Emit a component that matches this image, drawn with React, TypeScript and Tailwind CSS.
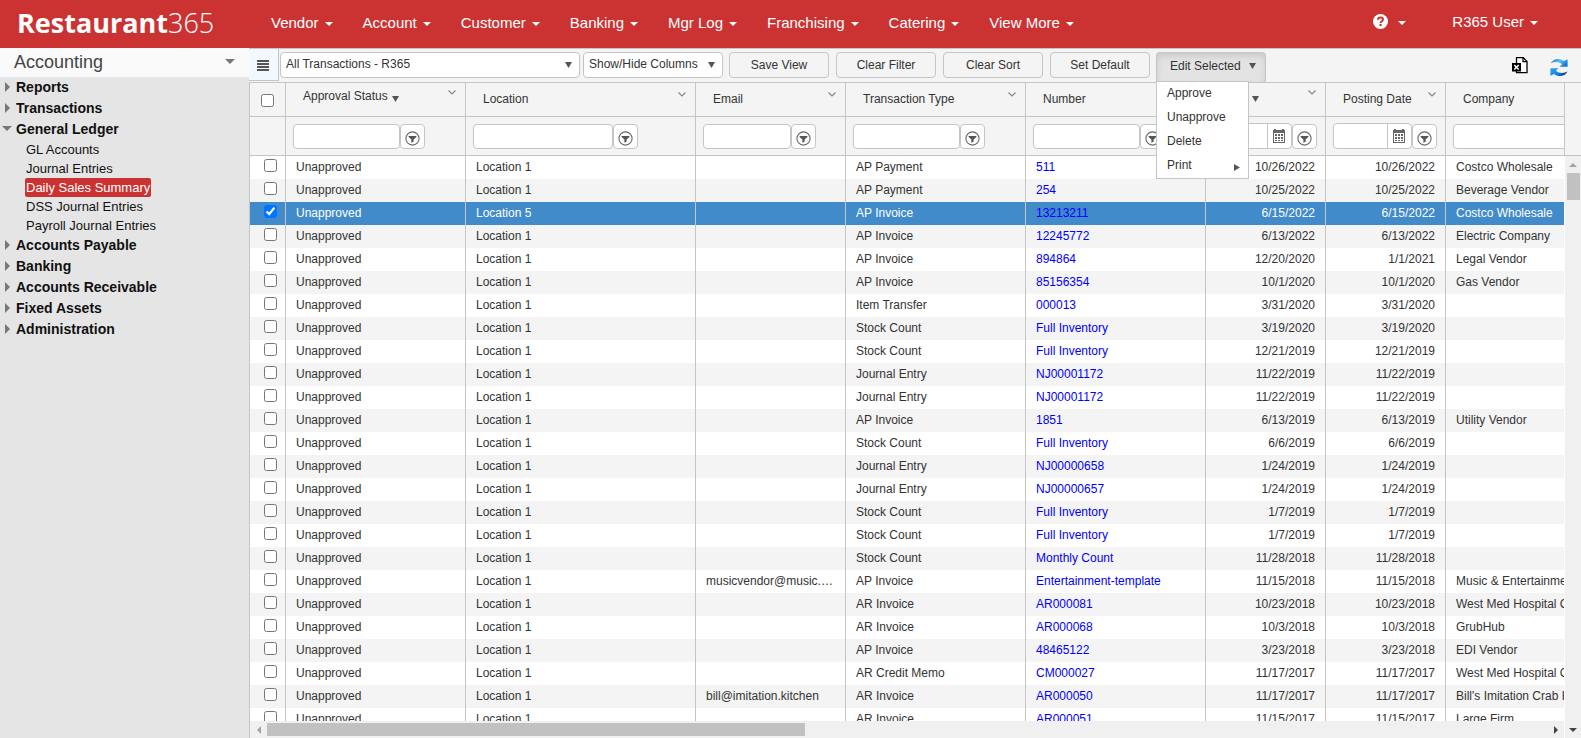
import { clsx } from "clsx";

const navItems = ["Vendor", "Account", "Customer", "Banking", "Mgr Log", "Franchising", "Catering", "View More"];

const sections = [
  { name: "Reports" },
  { name: "Transactions" },
  {
    name: "General Ledger",
    children: ["GL Accounts", "Journal Entries", "Daily Sales Summary", "DSS Journal Entries", "Payroll Journal Entries"],
  },
  { name: "Accounts Payable" },
  { name: "Banking" },
  { name: "Accounts Receivable" },
  { name: "Fixed Assets" },
  { name: "Administration" },
];

const columns = [
  { name: "Approval Status", width: "w-[180px]", sorted: true },
  { name: "Location", width: "w-[230px]" },
  { name: "Email", width: "w-[150px]" },
  { name: "Transaction Type", width: "w-[180px]" },
  { name: "Number", width: "w-[180px]" },
  { name: "Date", width: "w-[120px]", sorted: true, date: true },
  { name: "Posting Date", width: "w-[120px]", date: true },
  { name: "Company", width: "w-[230px]" },
];

// location, email, type, number, date, posting date, company
const rows = [
  ["Location 1", "", "AP Payment", "511", "10/26/2022", "10/26/2022", "Costco Wholesale"],
  ["Location 1", "", "AP Payment", "254", "10/25/2022", "10/25/2022", "Beverage Vendor"],
  ["Location 5", "", "AP Invoice", "13213211", "6/15/2022", "6/15/2022", "Costco Wholesale"],
  ["Location 1", "", "AP Invoice", "12245772", "6/13/2022", "6/13/2022", "Electric Company"],
  ["Location 1", "", "AP Invoice", "894864", "12/20/2020", "1/1/2021", "Legal Vendor"],
  ["Location 1", "", "AP Invoice", "85156354", "10/1/2020", "10/1/2020", "Gas Vendor"],
  ["Location 1", "", "Item Transfer", "000013", "3/31/2020", "3/31/2020", ""],
  ["Location 1", "", "Stock Count", "Full Inventory", "3/19/2020", "3/19/2020", ""],
  ["Location 1", "", "Stock Count", "Full Inventory", "12/21/2019", "12/21/2019", ""],
  ["Location 1", "", "Journal Entry", "NJ00001172", "11/22/2019", "11/22/2019", ""],
  ["Location 1", "", "Journal Entry", "NJ00001172", "11/22/2019", "11/22/2019", ""],
  ["Location 1", "", "AP Invoice", "1851", "6/13/2019", "6/13/2019", "Utility Vendor"],
  ["Location 1", "", "Stock Count", "Full Inventory", "6/6/2019", "6/6/2019", ""],
  ["Location 1", "", "Journal Entry", "NJ00000658", "1/24/2019", "1/24/2019", ""],
  ["Location 1", "", "Journal Entry", "NJ00000657", "1/24/2019", "1/24/2019", ""],
  ["Location 1", "", "Stock Count", "Full Inventory", "1/7/2019", "1/7/2019", ""],
  ["Location 1", "", "Stock Count", "Full Inventory", "1/7/2019", "1/7/2019", ""],
  ["Location 1", "", "Stock Count", "Monthly Count", "11/28/2018", "11/28/2018", ""],
  ["Location 1", "musicvendor@music.com", "AP Invoice", "Entertainment-template", "11/15/2018", "11/15/2018", "Music & Entertainment"],
  ["Location 1", "", "AR Invoice", "AR000081", "10/23/2018", "10/23/2018", "West Med Hospital Catering"],
  ["Location 1", "", "AR Invoice", "AR000068", "10/3/2018", "10/3/2018", "GrubHub"],
  ["Location 1", "", "AP Invoice", "48465122", "3/23/2018", "3/23/2018", "EDI Vendor"],
  ["Location 1", "", "AR Credit Memo", "CM000027", "11/17/2017", "11/17/2017", "West Med Hospital Catering"],
  ["Location 1", "bill@imitation.kitchen", "AR Invoice", "AR000050", "11/17/2017", "11/17/2017", "Bill's Imitation Crab Kitchen"],
  ["Location 1", "", "AR Invoice", "AR000051", "11/15/2017", "11/15/2017", "Large Firm"],
];

const selectedRow = 2;

function Caret() {
  return (
    <svg width="8" height="4" viewBox="0 0 8 4" fill="currentColor" className="mt-0.5 shrink-0">
      <path d="M0 0h8L4 4z" />
    </svg>
  );
}

function DownArrow({ className }: { className?: string }) {
  return (
    <svg width="7" height="6" viewBox="0 0 7 6" fill="#555" className={clsx("shrink-0", className)}>
      <path d="M0 0h7L3.5 6z" />
    </svg>
  );
}

function Chevron() {
  return (
    <svg width="8" height="5" viewBox="0 0 8 5" fill="none" stroke="#888" strokeWidth="1.2">
      <path d="M0.5 0.5L4 4L7.5 0.5" />
    </svg>
  );
}

function FilterIcon() {
  return (
    <svg width="15" height="15" viewBox="0 0 15 15">
      <circle cx="7.5" cy="7.5" r="6.6" fill="#fff" stroke="#666" strokeWidth="1.1" />
      <path d="M3.6 4.9h7.8v1.2L8.6 8.4v2.4l-2.2.9V8.4L3.6 6.1z" fill="#555" />
    </svg>
  );
}

function CalendarIcon() {
  return (
    <svg width="12" height="15" viewBox="0 0 12 15" fill="#666">
      <path d="M0 1h1V0h2v1h6V0h2v1h1v13H0zM1 4v9h10V4z" fillRule="evenodd" />
      <path d="M2 5h2v2H2zM5 5h2v2H5zM8 5h2v2H8zM2 8h2v2H2zM5 8h2v2H5zM8 8h2v2H8zM2 11h2v1H2zM5 11h2v1H5zM8 11h2v1H8z" />
    </svg>
  );
}

function ExcelIcon() {
  return (
    <svg width="16" height="17" viewBox="0 0 16 17">
      <path d="M4.5 6V0.7h6.8l3.7 3.7v11.3H4.5V14" fill="#fff" stroke="#000" strokeWidth="1.3" />
      <path d="M11 0.7v4H15" fill="none" stroke="#000" strokeWidth="1.2" />
      <path d="M0 6h9v8.5H0z" />
      <path d="M2.3 8l4.4 4.6M6.7 8l-4.4 4.6" stroke="#fff" strokeWidth="1.5" />
    </svg>
  );
}

function RefreshIcon() {
  return (
    <svg width="18" height="19" viewBox="0 0 18 19">
      <defs>
        <linearGradient id="refreshTop" x1="0" x2="1" y1="0" y2="0.6">
          <stop offset="0" stopColor="#0b5fc4" />
          <stop offset="0.5" stopColor="#5cc0f8" />
          <stop offset="1" stopColor="#0e78dc" />
        </linearGradient>
        <linearGradient id="refreshBottom" x1="0" x2="1" y1="0" y2="0.6">
          <stop offset="0" stopColor="#2aa5f5" />
          <stop offset="0.6" stopColor="#1583e6" />
          <stop offset="1" stopColor="#063c92" />
        </linearGradient>
      </defs>
      <path d="M0.5 5.5C3 0.8 9 -0.8 14 3L17.6 1.2v7.6H9.6l2.6-2.5C8.8 3.6 4.5 3.4 0.5 5.5z" fill="url(#refreshTop)" />
      <path d="M17.5 13.5C15 18.2 9 19.8 4 16L0.4 17.8v-7.6h8l-2.6 2.5c3.4 2.7 7.7 2.9 11.7.8z" fill="url(#refreshBottom)" />
    </svg>
  );
}

function TopBar() {
  return (
    <header className="flex h-12 shrink-0 items-center bg-[#cb3333] pb-0.5 text-[15px] text-white">
      <a href="#" className="w-[253px] shrink-0 pl-[17px] font-['Open_Sans',sans-serif] text-[27px] leading-9 font-bold">
        Restaurant<span className="font-light">365</span>
      </a>
      <nav className="flex gap-[30px] pl-[18px]">
        {navItems.map((item) => (
          <button key={item} className="flex items-center gap-1.5 whitespace-nowrap">
            {item}
            <Caret />
          </button>
        ))}
      </nav>
      <div className="ml-auto flex items-center gap-[46px] pr-[43px] pb-0.5">
        <button aria-label="Help" className="flex items-center gap-2.5">
          <svg width="15" height="15" viewBox="0 0 15 15">
            <circle cx="7.5" cy="7.5" r="7.5" fill="#fff" />
            <path d="M4.9 5.8C5 4.3 6 3.5 7.5 3.5s2.5.8 2.5 2C10 7.2 7.6 7.2 7.6 9" fill="none" stroke="#cb3333" strokeWidth="2" />
            <path d="M6.5 10h2.2v2H6.5z" fill="#cb3333" />
          </svg>
          <Caret />
        </button>
        <button className="flex items-center gap-1.5">
          R365 User
          <Caret />
        </button>
      </div>
    </header>
  );
}

function Sidebar() {
  return (
    <aside className="w-[249px] shrink-0 bg-[#e5e5e5]">
      <button className="flex h-[29px] w-full items-center justify-between bg-[#fafafa] px-3.5 pb-0.5 text-lg leading-7 text-[#444]">
        Accounting
        <svg width="10" height="5" viewBox="0 0 10 5" fill="#777">
          <path d="M0 0h10L5 5z" />
        </svg>
      </button>
      <ul className="text-[#111]">
        {sections.map((section) => (
          <li key={section.name}>
            <button className="flex h-[21px] items-center pb-0.5 text-sm font-bold">
              <span className="flex w-4 justify-center pr-0.5">
                {section.children ? (
                  <svg width="10" height="5" viewBox="0 0 10 5" fill="#777">
                    <path d="M0 0h10L5 5z" />
                  </svg>
                ) : (
                  <svg width="5" height="10" viewBox="0 0 5 10" fill="#777">
                    <path d="M0 0v10l5-5z" />
                  </svg>
                )}
              </span>
              {section.name}
            </button>
            {section.children && (
              <ul className="pl-[25px] text-[13px]">
                {section.children.map((child) => (
                  <li key={child} className="flex h-[19px] items-center">
                    <a
                      href="#"
                      className={clsx(
                        "rounded-xs px-px leading-[19px]",
                        child === "Daily Sales Summary" && "bg-[#cb3333] text-white"
                      )}
                    >
                      {child}
                    </a>
                  </li>
                ))}
              </ul>
            )}
          </li>
        ))}
      </ul>
    </aside>
  );
}

function ToolbarSelect({ label, value, className }: { label: string; value: string; className: string }) {
  return (
    <div className={clsx("relative shrink-0", className)}>
      <select
        aria-label={label}
        className="h-[26px] w-full appearance-none rounded border border-[#c5c5c5] bg-white pr-5 pb-[3px] pl-[5px]"
      >
        <option>{value}</option>
      </select>
      <DownArrow className="pointer-events-none absolute top-2.5 right-2" />
    </div>
  );
}

function Toolbar() {
  return (
    <div className="flex h-[34px] shrink-0 border-t border-[#c5c5c5] bg-[#f4f4f4]">
      <button
        aria-label="Toggle menu"
        className="flex h-8 w-[30px] shrink-0 items-center justify-center border-r border-b border-[#c5c5c5] bg-[#f3f8fc] pt-0.5 pr-px"
      >
        <svg width="12" height="11" viewBox="0 0 12 11" fill="#555">
          <path d="M0 0h12v2H0zM0 3h12v2H0zM0 6h12v2H0zM0 9h12v2H0z" />
        </svg>
      </button>
      <div className="flex flex-1 items-start pt-[3px] pl-px">
        <ToolbarSelect label="View" value="All Transactions - R365" className="mr-[3px] w-[300px]" />
        <ToolbarSelect label="Columns" value="Show/Hide Columns" className="w-[140px]" />
        <div className="ml-1.5 flex gap-[7px]">
          {["Save View", "Clear Filter", "Clear Sort", "Set Default"].map((label) => (
            <button key={label} className="h-[26px] w-[100px] rounded border border-[#c5c5c5]">
              {label}
            </button>
          ))}
        </div>
        <div className="relative ml-1.5">
          <button
            aria-expanded="true"
            className="flex h-[30px] w-[110px] items-center gap-2 rounded-t border border-b-0 border-[#c5c5c5] bg-[#e3e3e3] pb-1 pl-[13px] shadow-[inset_0_3px_6px_#c9c9c9]"
          >
            Edit Selected
            <DownArrow />
          </button>
          <ul className="absolute top-[29px] left-0 z-10 w-[93px] border border-[#c5c5c5] bg-white">
            {["Approve", "Unapprove", "Delete", "Print"].map((label) => (
              <li key={label}>
                <button className="flex h-6 w-full items-center justify-between pr-2 pb-0.5 pl-2.5">
                  {label}
                  {label === "Print" && (
                    <svg width="6" height="7" viewBox="0 0 6 7" fill="#555" className="mt-1">
                      <path d="M0 0v7l6-3.5z" />
                    </svg>
                  )}
                </button>
              </li>
            ))}
          </ul>
        </div>
      </div>
      <div className="flex items-center gap-[22px] pr-[13px]">
        <button aria-label="Export to Excel">
          <ExcelIcon />
        </button>
        <button aria-label="Refresh" className="pt-1">
          <RefreshIcon />
        </button>
      </div>
    </div>
  );
}

function FilterCell({ name, date }: { name: string; date?: boolean }) {
  return (
    <div className="flex items-center px-[7px]">
      {date ? (
        <div className="flex h-[26px] w-[79px] rounded border border-[#c5c5c5] bg-white">
          <input aria-label={`Filter ${name}`} className="min-w-0 flex-1" />
          <button
            aria-label={`Pick ${name}`}
            className="flex w-6 items-center justify-center border-l border-[#c5c5c5] pr-px"
          >
            <CalendarIcon />
          </button>
        </div>
      ) : (
        <input
          aria-label={`Filter ${name}`}
          className="h-[25px] w-[65%] rounded border border-[#c5c5c5] bg-white px-1"
        />
      )}
      <button
        aria-label={`Filter options for ${name}`}
        className="flex h-[25px] w-[25px] items-center justify-center rounded border border-[#c5c5c5] bg-white pt-1"
      >
        <FilterIcon />
      </button>
    </div>
  );
}

function TransactionsTable() {
  return (
    <table className="w-[1426px] table-fixed border-separate border-spacing-0">
      <colgroup>
        <col className="w-9" />
        {columns.map((col) => (
          <col key={col.name} className={col.width} />
        ))}
      </colgroup>
      <thead className="bg-[#f4f4f4]">
        <tr>
          <th className="h-[34px] border-r border-b border-[#c5c5c5] p-0">
            <input type="checkbox" aria-label="Select all" className="m-0 mt-0.5 ml-[11px] block h-[13px] w-[13px]" />
          </th>
          {columns.map((col) => (
            <th key={col.name} className="h-[34px] border-r border-b border-[#c5c5c5] p-0 font-normal">
              <div
                className={clsx(
                  "flex items-center justify-between pr-[9px] pl-[17px] leading-4",
                  col.sorted ? "pb-2" : "pb-0.5"
                )}
              >
                <span className="flex items-center gap-1 whitespace-nowrap">
                  {col.name}
                  {col.sorted && <DownArrow className="mt-1.5" />}
                </span>
                <span className={col.sorted ? "pb-1.5" : "pb-2"}>
                  <Chevron />
                </span>
              </div>
            </th>
          ))}
        </tr>
        <tr>
          <td className="h-[39px] border-r border-b border-[#c5c5c5] p-0" />
          {columns.map((col) => (
            <td key={col.name} className="h-[39px] border-r border-b border-[#c5c5c5] p-0">
              <FilterCell name={col.name} date={col.date} />
            </td>
          ))}
        </tr>
      </thead>
      <tbody>
        {rows.map((row, i) => {
          const selected = i === selectedRow;
          return (
            <tr
              key={i}
              className={clsx(selected ? "bg-[#428bca] text-white" : i % 2 ? "bg-[#f4f4f4]" : "bg-white")}
            >
              <td className="h-[23px] border-r border-[#c5c5c5] p-0">
                <input
                  type="checkbox"
                  aria-label={`Select row ${i + 1}`}
                  defaultChecked={selected}
                  className="m-0 mb-1 ml-3.5 block h-[13px] w-[13px]"
                />
              </td>
              {["Unapproved", ...row].map((value, c) => (
                <td
                  key={c}
                  className={clsx(
                    "h-[23px] truncate border-r border-[#c5c5c5] px-2.5 py-0 leading-[23px]",
                    columns[c].date && "text-right"
                  )}
                >
                  {columns[c].name === "Number" ? (
                    <a href="#" className="text-[#0000ff]">
                      {value}
                    </a>
                  ) : (
                    value
                  )}
                </td>
              ))}
            </tr>
          );
        })}
      </tbody>
    </table>
  );
}

function HorizontalScrollbar() {
  return (
    <div className="flex h-[17px] shrink-0 items-center bg-[#f0f0f0]">
      <span className="flex w-[17px] justify-center">
        <svg width="4" height="8" viewBox="0 0 4 8" fill="#a3a3a3">
          <path d="M4 0v8L0 4z" />
        </svg>
      </span>
      <div className="flex-1">
        <div className="h-[13px] w-[42%] bg-[#c1c1c1]" />
      </div>
      <span className="flex w-[17px] justify-center">
        <svg width="4" height="8" viewBox="0 0 4 8" fill="#444">
          <path d="M0 0v8l4-4z" />
        </svg>
      </span>
    </div>
  );
}

function VerticalScrollbar() {
  return (
    <div className="flex w-[17px] shrink-0 flex-col">
      <div className="h-[73px] border-b border-l border-[#c5c5c5] bg-[#f4f4f4]" />
      <div className="flex flex-1 flex-col items-center border-l border-white bg-[#f0f0f0]">
        <span className="flex h-[17px] items-center">
          <svg width="8" height="4" viewBox="0 0 8 4" fill="#a3a3a3">
            <path d="M0 4h8L4 0z" />
          </svg>
        </span>
        <div className="flex-1">
          <div className="h-[27px] w-[13px] bg-[#c1c1c1]" />
        </div>
        <span className="flex h-[17px] items-center">
          <svg width="8" height="4" viewBox="0 0 8 4" fill="#444">
            <path d="M0 0h8L4 4z" />
          </svg>
        </span>
      </div>
    </div>
  );
}

export default function App() {
  return (
    <div className="flex h-screen flex-col overflow-hidden bg-white font-['Liberation_Sans',Arial,sans-serif] text-xs text-[#333]">
      <TopBar />
      <div className="flex min-h-0 flex-1">
        <Sidebar />
        <main className="flex min-w-0 flex-1 flex-col">
          <Toolbar />
          <div className="flex min-h-0 flex-1 border-t border-l border-[#c5c5c5]">
            <div className="flex min-w-0 flex-1 flex-col">
              <div className="min-h-0 flex-1 overflow-hidden">
                <TransactionsTable />
              </div>
              <HorizontalScrollbar />
            </div>
            <VerticalScrollbar />
          </div>
        </main>
      </div>
    </div>
  );
}
